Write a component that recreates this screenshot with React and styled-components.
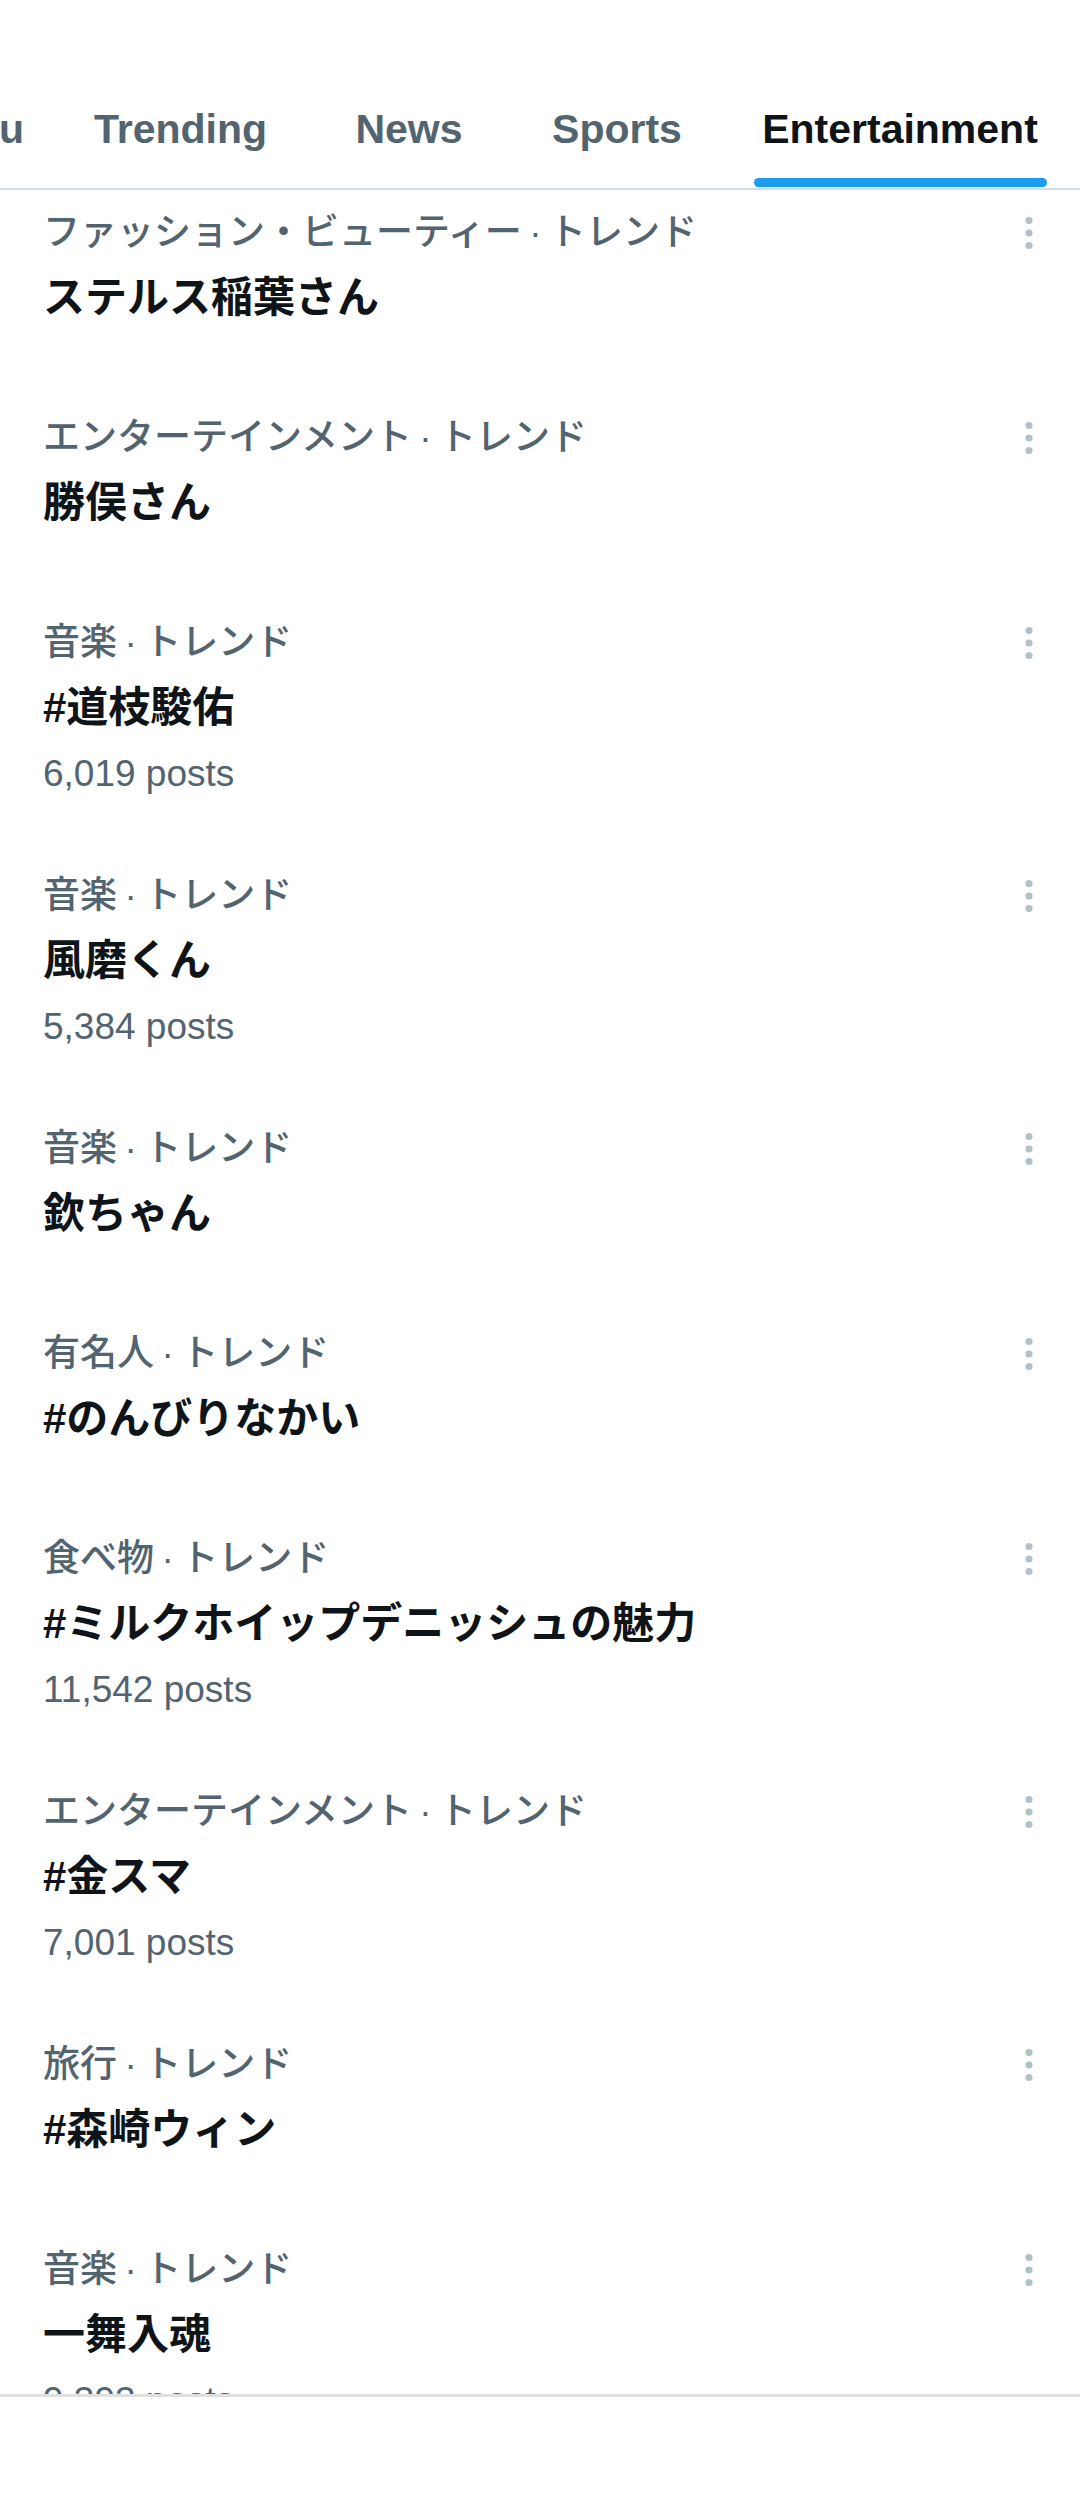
import React, { useLayoutEffect, useRef } from 'react'
import styled, { createGlobalStyle } from 'styled-components'

const GlobalStyle = createGlobalStyle`
  html, body {
    margin: 0;
    padding: 0;
    background: #ffffff;
  }
  body {
    font-family: "Liberation Sans", "Noto Sans CJK JP", sans-serif;
    -webkit-font-smoothing: antialiased;
  }
`

const SEP = '\u2009·\u2009'

const tabs = [
  { label: 'For you', width: 216 },
  { label: 'Trending', width: 247 },
  { label: 'News', width: 210 },
  { label: 'Sports', width: 206 },
  { label: 'Entertainment', width: 360, active: true },
]

const trends = [
  { category: 'ファッション・ビューティー', title: 'ステルス稲葉さん' },
  { category: 'エンターテインメント', title: '勝俣さん' },
  { category: '音楽', title: '#道枝駿佑', posts: '6,019 posts' },
  { category: '音楽', title: '風磨くん', posts: '5,384 posts' },
  { category: '音楽', title: '欽ちゃん' },
  { category: '有名人', title: '#のんびりなかい' },
  { category: '食べ物', title: '#ミルクホイップデニッシュの魅力', posts: '11,542 posts' },
  { category: 'エンターテインメント', title: '#金スマ', posts: '7,001 posts' },
  { category: '旅行', title: '#森崎ウィン' },
  { category: '音楽', title: '一舞入魂', posts: '9,393 posts' },
]

const Screen = styled.div`
  display: flex;
  flex-direction: column;
  width: 1080px;
  height: 2520px;
  overflow: hidden;
  background: #ffffff;
`

const Header = styled.header`
  display: flex;
  flex-direction: column;
  flex-shrink: 0;
  padding-top: 71px;
  background: #ffffff;
`

const TabBar = styled.nav`
  display: flex;
  justify-content: flex-end;
  height: 117px;
  overflow: hidden;
  border-bottom: 2px solid #d6dee3;
`

const Tab = styled.div`
  position: relative;
  flex-shrink: 0;
  display: flex;
  align-items: center;
  justify-content: center;
  width: ${p => p.$w}px;
  font-size: 41px;
  font-weight: 700;
  line-height: 1;
  color: ${p => (p.$active ? '#0f1419' : '#536471')};
  white-space: nowrap;
`

const Indicator = styled.span`
  position: absolute;
  left: 34px;
  right: 33px;
  bottom: 1px;
  height: 9px;
  border-radius: 5px;
  background: #1d9bf0;
`

const Feed = styled.main`
  flex: 1;
  overflow: hidden;
`

const Item = styled.section`
  display: flex;
  flex-direction: column;
  box-sizing: border-box;
  min-height: 205px;
  padding: 35px 44px 36px 43px;
`

const TopRow = styled.div`
  display: flex;
  align-items: center;
  justify-content: space-between;
  height: 50px;
`

const Category = styled.span`
  font-size: 37px;
  font-weight: 500;
  line-height: 50px;
  color: #536471;
  white-space: nowrap;
`

const Title = styled.span`
  margin-top: 14px;
  font-size: 42px;
  font-weight: 700;
  line-height: 52px;
  color: #0f1419;
  white-space: nowrap;
`

const Posts = styled.span`
  margin-top: 14px;
  font-size: 37px;
  line-height: 52px;
  color: #536471;
  white-space: nowrap;
`

const BottomBar = styled.footer`
  flex-shrink: 0;
  height: 123px;
  border-top: 3px solid #e0e0e0;
  background: #ffffff;
`

const MoreIcon = () => (
  <svg width="14" height="40" viewBox="0 0 14 40" aria-hidden="true">
    <circle cx="7" cy="7.5" r="3.6" fill="#b2c0ca" />
    <circle cx="7" cy="20" r="3.6" fill="#b2c0ca" />
    <circle cx="7" cy="32.5" r="3.6" fill="#b2c0ca" />
  </svg>
)

const TrendItem = ({ trend }) => (
  <Item>
    <TopRow>
      <Category>{trend.category + SEP + 'トレンド'}</Category>
      <MoreIcon />
    </TopRow>
    <Title>{trend.title}</Title>
    {trend.posts && <Posts>{trend.posts}</Posts>}
  </Item>
)

export default function App() {
  const feedRef = useRef(null)

  // list is scrolled a little under the tab header
  useLayoutEffect(() => {
    if (feedRef.current) feedRef.current.scrollTop = 17
  }, [])

  return (
    <>
      <GlobalStyle />
      <Screen>
        <Header>
          <TabBar>
            {tabs.map(tab => (
              <Tab key={tab.label} $w={tab.width} $active={tab.active}>
                {tab.label}
                {tab.active && <Indicator />}
              </Tab>
            ))}
          </TabBar>
        </Header>
        <Feed ref={feedRef}>
          {trends.map((trend, i) => (
            <TrendItem trend={trend} key={i} />
          ))}
        </Feed>
        <BottomBar />
      </Screen>
    </>
  )
}
